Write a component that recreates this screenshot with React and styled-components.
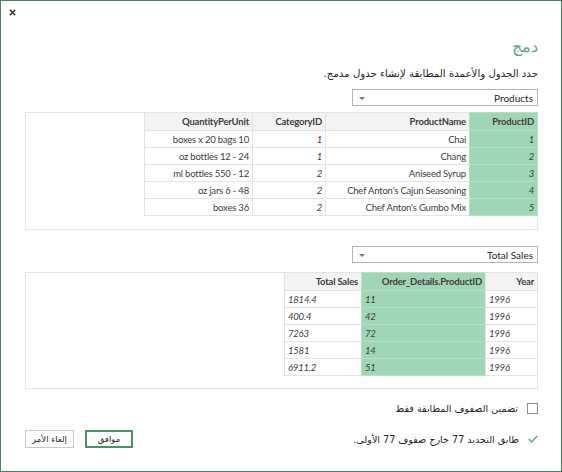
import React from "react";
import styled, { createGlobalStyle } from "styled-components";

const Global = createGlobalStyle`
  html, body { margin: 0; padding: 0; background: #ffffff; }
  body { font-family: "Lato", "DejaVu Sans", sans-serif; color: #333; }
  * { box-sizing: border-box; }
`;

const Window = styled.div`
  width: 562px;
  height: 472px;
  border: 1px solid #3f8a5f;
  background: #ffffff;
  display: flex;
  flex-direction: column;
`;

const TitleBar = styled.div`
  height: 26px;
  display: flex;
  align-items: flex-start;
  padding: 8px 0 0 8px;
`;

const CloseButton = styled.button`
  width: 8px;
  height: 8px;
  padding: 0;
  border: 0;
  background: transparent;
  display: flex;
  cursor: pointer;
`;

const Content = styled.div`
  direction: rtl;
  display: flex;
  flex-direction: column;
  align-items: stretch;
  padding: 0 23px 0 24px;
  font-family: "DejaVu Sans", sans-serif;
`;

const Heading = styled.h1`
  margin: 10px 0 0;
  font-family: "DejaVu Sans ExtraLight", "DejaVu Sans", sans-serif;
  font-size: 16px;
  line-height: 20px;
  font-weight: 200;
  color: #5aa888;
`;

const Instruction = styled.p`
  margin: 9px 0 0;
  font-size: 10.2px;
  line-height: 16px;
  color: #262626;
`;

const Select = styled.div`
  margin-top: ${(p) => p.$gap}px;
  align-self: flex-start;
  width: 186px;
  height: 17px;
  border: 1px solid #b4b4b4;
  background: #fff;
  display: flex;
  align-items: center;
  justify-content: space-between;
  padding: 0 4px 0 6px;
  font-family: "Lato", sans-serif;
  font-size: 10px;
  color: #262626;
`;

const Arrow = styled.span`
  width: 0;
  height: 0;
  border-left: 3px solid transparent;
  border-right: 3px solid transparent;
  border-top: 3px solid #777;
  margin-top: 1px;
`;

const Preview = styled.div`
  margin-top: ${(p) => p.$gap}px;
  height: ${(p) => p.$h}px;
  border: 1px solid #e4e4e4;
  display: flex;
  align-items: flex-start;
`;

const Grid = styled.table`
  border-collapse: collapse;
  font-family: "Lato", sans-serif;
  font-size: 9.5px;
  letter-spacing: -0.2px;
  color: #404040;
  margin-top: -1px;
  margin-right: -1px;
`;

const Head = styled.th`
  height: 18px;
  width: ${(p) => p.$w}px;
  padding: 0 3px;
  border: 1px solid ${(p) => (p.$key ? "#b8e0c8" : "#e4e4e4")};
  background: ${(p) => (p.$key ? "#9fd6b6" : "#f3f3f3")};
  font-weight: 700;
  text-align: right;
  direction: ltr;
  white-space: nowrap;
`;

const Cell = styled.td`
  height: 17px;
  padding: 0 3px;
  border: 1px solid ${(p) => (p.$key ? "#b8e0c8" : "#e4e4e4")};
  background: ${(p) => (p.$key ? "#9fd6b6" : "#ffffff")};
  font-style: ${(p) => (p.$num ? "italic" : "normal")};
  text-align: ${(p) => p.$align || "right"};
  direction: ltr;
  white-space: nowrap;
`;

const CheckRow = styled.label`
  margin-top: 13px;
  display: flex;
  align-items: center;
  gap: 9px;
  font-size: 9.6px;
  color: #262626;
  height: 12px;
`;

const Box = styled.span`
  width: 11px;
  height: 11px;
  border: 1px solid #8c8c8c;
  background: #fff;
`;

const Footer = styled.div`
  margin-top: 16px;
  display: flex;
  align-items: center;
  justify-content: space-between;
`;

const Status = styled.div`
  display: flex;
  align-items: center;
  gap: 9px;
  font-size: 9.6px;
  color: #262626;
`;

const Buttons = styled.div`
  display: flex;
  gap: 11px;
`;

const Button = styled.button`
  height: 18px;
  width: ${(p) => p.$w}px;
  padding: 0;
  font-family: "DejaVu Sans", sans-serif;
  font-size: 8.5px;
  color: #262626;
  background: #fdfdfd;
  border: ${(p) => (p.$primary ? "2px solid #4a9367" : "1px solid #c9c9c9")};
  cursor: pointer;
`;

const products = [
  ["1", "Chai", "1", "boxes x 20 bags 10"],
  ["2", "Chang", "1", "oz bottles 12 - 24"],
  ["3", "Aniseed Syrup", "2", "ml bottles 550 - 12"],
  ["4", "Chef Anton's Cajun Seasoning", "2", "oz jars 6 - 48"],
  ["5", "Chef Anton's Gumbo Mix", "2", "boxes 36"],
];

const sales = [
  ["1996", "11", "1814.4"],
  ["1996", "42", "400.4"],
  ["1996", "72", "7263"],
  ["1996", "14", "1581"],
  ["1996", "51", "6911.2"],
];

export default function App() {
  return (
    <>
      <Global />
      <Window>
        <TitleBar>
          <CloseButton aria-label="close">
            <svg width="7" height="7" viewBox="0 0 7 7">
              <path d="M0.8 0.8 L6.2 6.2 M6.2 0.8 L0.8 6.2" stroke="#333" strokeWidth="1.4" />
            </svg>
          </CloseButton>
        </TitleBar>
        <Content>
          <Heading>دمج</Heading>
          <Instruction>حدد الجدول والأعمدة المطابقة لإنشاء جدول مدمج.</Instruction>
          <Select $gap={7}>
            <span>Products</span>
            <Arrow />
          </Select>
          <Preview $gap={6} $h={118}>
            <Grid>
              <thead>
                <tr>
                  <Head $w={68} $key>ProductID</Head>
                  <Head $w={144}>ProductName</Head>
                  <Head $w={73}>CategoryID</Head>
                  <Head $w={108}>QuantityPerUnit</Head>
                </tr>
              </thead>
              <tbody>
                {products.map((r) => (
                  <tr key={r[0]}>
                    <Cell $key $num>{r[0]}</Cell>
                    <Cell>{r[1]}</Cell>
                    <Cell $num>{r[2]}</Cell>
                    <Cell>{r[3]}</Cell>
                  </tr>
                ))}
              </tbody>
            </Grid>
          </Preview>
          <Select $gap={16}>
            <span>Total Sales</span>
            <Arrow />
          </Select>
          <Preview $gap={9} $h={117}>
            <Grid>
              <thead>
                <tr>
                  <Head $w={52}>Year</Head>
                  <Head $w={124} $key>Order_Details.ProductID</Head>
                  <Head $w={77}>Total Sales</Head>
                </tr>
              </thead>
              <tbody>
                {sales.map((r, i) => (
                  <tr key={i}>
                    <Cell $num $align="left">{r[0]}</Cell>
                    <Cell $num $key $align="left">{r[1]}</Cell>
                    <Cell $num $align="left">{r[2]}</Cell>
                  </tr>
                ))}
              </tbody>
            </Grid>
          </Preview>
          <CheckRow>
            <Box />
            <span>تضمين الصفوف المطابقة فقط</span>
          </CheckRow>
          <Footer>
            <Status>
              <svg width="10" height="8" viewBox="0 0 10 8">
                <polyline points="0.8,4 3.6,6.8 9.2,1" fill="none" stroke="#4b9a6d" strokeWidth="1.2" />
              </svg>
              <span>طابق التحديد 77 خارج صفوف 77 الأولى.</span>
            </Status>
            <Buttons>
              <Button $w={48} $primary>موافق</Button>
              <Button $w={49}>إلغاء الأمر</Button>
            </Buttons>
          </Footer>
        </Content>
      </Window>
    </>
  );
}
